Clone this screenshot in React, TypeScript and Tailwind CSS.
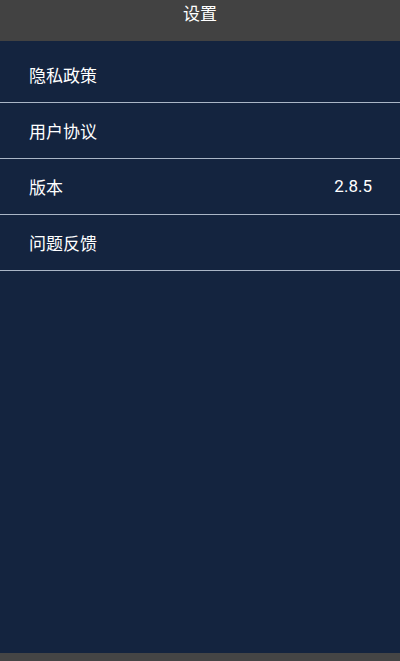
export default function App() {
  const rows = [
    { label: "隐私政策" },
    { label: "用户协议" },
    { label: "版本", value: "2.8.5" },
    { label: "问题反馈" },
  ];

  return (
    <div
      className="flex h-[661px] w-[400px] flex-col bg-[#14243f] text-white"
      style={{ fontFamily: '"Noto Sans CJK SC", "Noto Sans", sans-serif' }}
    >
      <header className="flex h-[41px] shrink-0 items-start justify-center bg-[#424242] pt-[1px]">
        <span className="text-[17px] leading-[24px]">设置</span>
      </header>
      <main className="flex-1 pt-[6px]">
        {rows.map((row) => (
          <div
            key={row.label}
            className="flex h-[56px] items-center justify-between border-b border-[#aab6c6] pl-[29px] pr-[28px]"
          >
            <span className="text-[17px]">{row.label}</span>
            {row.value && (
              <span className="text-[17px]" style={{ fontFamily: '"Roboto", sans-serif' }}>
                {row.value}
              </span>
            )}
          </div>
        ))}
      </main>
      <footer className="h-[8px] shrink-0 bg-[#454545]" />
    </div>
  );
}
